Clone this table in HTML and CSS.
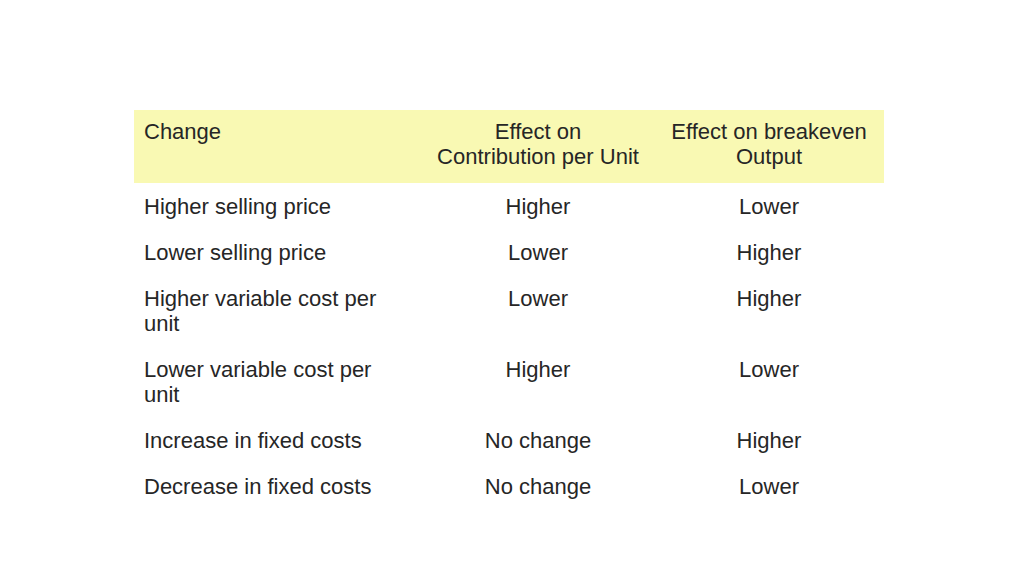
FILE: index.html
```
<!DOCTYPE html>
<html>
<head>
<meta charset="utf-8">
<link rel="stylesheet" href="styles.css">
</head>
<body>
<table class="effects">
  <thead>
    <tr class="head">
      <th class="c1">Change</th>
      <th class="c2">Effect on<br>Contribution per Unit</th>
      <th class="c3">Effect on breakeven<br>Output</th>
    </tr>
  </thead>
  <tbody>
    <tr><td class="c1">Higher selling price</td><td class="c2">Higher</td><td class="c3">Lower</td></tr>
    <tr><td class="c1">Lower selling price</td><td class="c2">Lower</td><td class="c3">Higher</td></tr>
    <tr><td class="c1">Higher variable cost per<br>unit</td><td class="c2">Lower</td><td class="c3">Higher</td></tr>
    <tr><td class="c1">Lower variable cost per<br>unit</td><td class="c2">Higher</td><td class="c3">Lower</td></tr>
    <tr><td class="c1">Increase in fixed costs</td><td class="c2">No change</td><td class="c3">Higher</td></tr>
    <tr><td class="c1">Decrease in fixed costs</td><td class="c2">No change</td><td class="c3">Lower</td></tr>
  </tbody>
</table>
</body>
</html>
```
FILE: styles.css
```
html, body {
  margin: 0;
  padding: 0;
  background: #ffffff;
}
body {
  font-family: "Liberation Sans", Arial, sans-serif;
  color: #262626;
}
.effects {
  margin: 110px 0 0 134px;
  width: 750px;
  border-collapse: collapse;
  table-layout: fixed;
  font-size: 22px;
  line-height: 25px;
}
.effects th {
  font-weight: normal;
  vertical-align: top;
  padding: 9px 6px 14px 10px;
}
.effects th.c2,
.effects th.c3,
.effects td.c2,
.effects td.c3 {
  padding-left: 0;
  padding-right: 0;
}
.head {
  background: #f9f9b3;
}
.effects td {
  vertical-align: top;
  padding: 10.5px 6px 10.5px 10px;
}
.c1 {
  width: 272px;
  text-align: left;
}
.c2 {
  width: 232px;
  text-align: center;
}
.c3 {
  width: 230px;
  text-align: center;
}
```
